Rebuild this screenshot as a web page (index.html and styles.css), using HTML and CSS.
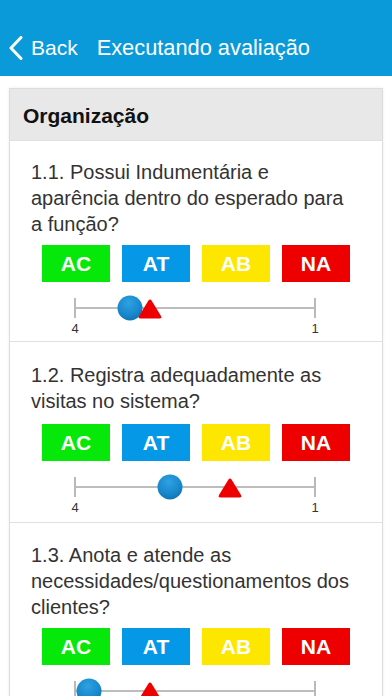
FILE: index.html
```html
<!DOCTYPE html>
<html lang="pt">
<head>
<meta charset="utf-8">
<title>Executando avaliação</title>
<link rel="stylesheet" href="styles.css">
</head>
<body>
<header class="navbar">
  <a class="back">
    <svg class="chev" width="14" height="24" viewBox="0 0 14 24"><polyline points="12,1.5 2,12 12,22.5" fill="none" stroke="#fff" stroke-width="3" stroke-linecap="round" stroke-linejoin="round"/></svg>
    <span>Back</span>
  </a>
  <h1 class="title">Executando avaliação</h1>
</header>
<main class="content">
  <section class="card">
    <div class="card-head">Organização</div>

    <div class="item item-1">
      <p class="q">1.1. Possui Indumentária e aparência dentro do esperado para a função?</p>
      <div class="choices">
        <span class="btn ac">AC</span><span class="btn at">AT</span><span class="btn ab">AB</span><span class="btn na">NA</span>
      </div>
      <div class="slider">
        <div class="track">
          <span class="dot" style="left:22.5%"></span>
          <svg class="tri" style="left:31%" width="24" height="20" viewBox="0 0 24 20"><path d="M10.3 1.8 Q12 -0.6 13.7 1.8 L23 17 Q24 19.5 21.5 19.5 L2.5 19.5 Q0 19.5 1 17 Z" fill="#ee0000"/></svg>
        </div>
        <div class="labels"><span>4</span><span>1</span></div>
      </div>
    </div>

    <div class="item item-2">
      <p class="q">1.2. Registra adequadamente as visitas no sistema?</p>
      <div class="choices">
        <span class="btn ac">AC</span><span class="btn at">AT</span><span class="btn ab">AB</span><span class="btn na">NA</span>
      </div>
      <div class="slider">
        <div class="track">
          <span class="dot" style="left:39.5%"></span>
          <svg class="tri" style="left:64.5%" width="24" height="20" viewBox="0 0 24 20"><path d="M10.3 1.8 Q12 -0.6 13.7 1.8 L23 17 Q24 19.5 21.5 19.5 L2.5 19.5 Q0 19.5 1 17 Z" fill="#ee0000"/></svg>
        </div>
        <div class="labels"><span>4</span><span>1</span></div>
      </div>
    </div>

    <div class="item item-3">
      <p class="q">1.3. Anota e atende as necessidades/questionamentos dos clientes?</p>
      <div class="choices">
        <span class="btn ac">AC</span><span class="btn at">AT</span><span class="btn ab">AB</span><span class="btn na">NA</span>
      </div>
      <div class="slider">
        <div class="track">
          <span class="dot" style="left:5.5%"></span>
          <svg class="tri" style="left:31%" width="24" height="20" viewBox="0 0 24 20"><path d="M10.3 1.8 Q12 -0.6 13.7 1.8 L23 17 Q24 19.5 21.5 19.5 L2.5 19.5 Q0 19.5 1 17 Z" fill="#ee0000"/></svg>
        </div>
        <div class="labels"><span>4</span><span>1</span></div>
      </div>
    </div>
  </section>
</main>
</body>
</html>
```
FILE: styles.css
```css
* { box-sizing: border-box; }
html, body { margin: 0; padding: 0; background: #fff; }
body {
  font-family: "Liberation Sans", Arial, sans-serif;
  color: #333;
}

.navbar {
  height: 76px;
  background: #0a9ad9;
  padding: 20px 0 0 9px;
  display: flex;
  align-items: center;
  color: #fff;
}
.back {
  display: flex;
  align-items: center;
  font-size: 21px;
  color: #fff;
}
.chev { margin-right: 8px; }
.title {
  margin: 0 0 0 19px;
  font-size: 21.8px;
  font-weight: normal;
  color: #fff;
}

.content { padding: 12px 9px 12px; }

.card {
  border: 1px solid #dcdcdc;
  background: #fff;
  box-shadow: 0 0 3px rgba(0,0,0,0.08);
}
.card-head {
  height: 51px;
  background: #e8e8e8;
  padding: 15px 0 0 13px;
  font-size: 21px;
  font-weight: bold;
  color: #111;
}

.item {
  border-top: 1px solid #e0e0e0;
  padding: 19px 25px 5px 21px;
}
.item-1 { padding-top: 18px; }
.item-2 { padding-top: 20px; padding-bottom: 7px; }
.item-2 .choices { margin-top: 10px; }

.q {
  margin: 0;
  font-size: 20px;
  line-height: 26px;
  color: #333;
}

.choices {
  display: flex;
  justify-content: center;
  gap: 12px;
  margin-top: 8px;
  padding-left: 4px;
}
.btn {
  width: 68px;
  height: 37px;
  display: flex;
  align-items: center;
  justify-content: center;
  color: #fff;
  font-weight: bold;
  font-size: 21px;
}
.ac { background: #06e80a; }
.at { background: #0598e6; }
.ab { background: #fde700; }
.na { background: #ee0000; }

.slider {
  width: 256px;
  margin: 16px auto 0;
  padding-left: 2px;
}
.track {
  position: relative;
  height: 20px;
  margin: 0 6px;
  border-left: 2px solid #b9b9b9;
  border-right: 2px solid #b9b9b9;
}
.track::before {
  content: "";
  position: absolute;
  left: 0;
  right: 0;
  top: 9px;
  height: 2px;
  background: #bdbdbd;
}
.dot {
  position: absolute;
  top: 10px;
  width: 25px;
  height: 25px;
  border-radius: 50%;
  transform: translate(-50%, -50%);
  background: radial-gradient(circle at 45% 30%, #2fa2e2 0%, #1687cb 55%, #0b64a0 100%);
}
.tri {
  position: absolute;
  top: 1px;
  transform: translateX(-50%);
}
.labels {
  display: flex;
  justify-content: space-between;
  margin-top: 4px;
  font-size: 13px;
  line-height: 14px;
  color: #333;
}
.labels span {
  width: 14px;
  text-align: center;
}
```
